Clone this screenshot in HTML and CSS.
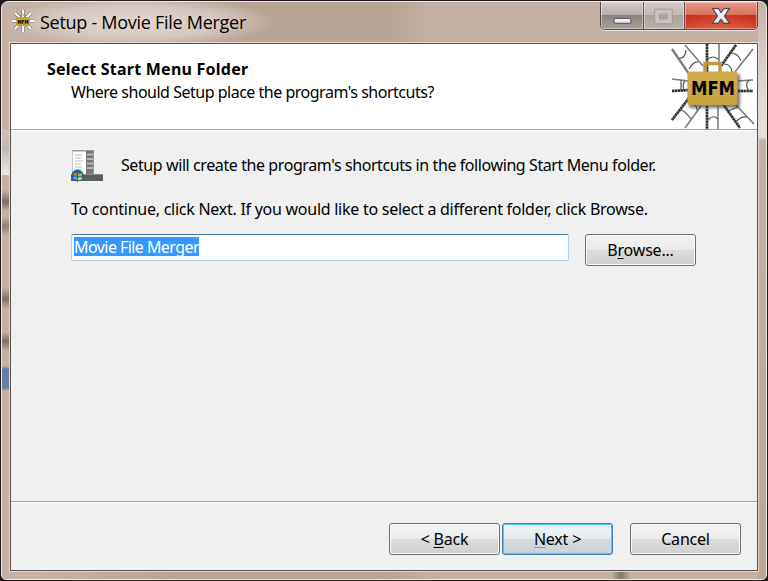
FILE: index.html
```html
<!DOCTYPE html>
<html lang="en">
<head>
<meta charset="utf-8">
<title>Setup - Movie File Merger</title>
<link rel="stylesheet" href="styles.css">
</head>
<body>
<svg width="0" height="0" class="defs" aria-hidden="true">
  <defs>
    <linearGradient id="gold" x1="0" y1="0" x2="0" y2="1"><stop offset="0" stop-color="#d1ad4d"/><stop offset="1" stop-color="#c6a13d"/></linearGradient>
    <linearGradient id="metal" x1="0" y1="0" x2="0" y2="1"><stop offset="0" stop-color="#fff"/><stop offset="1" stop-color="#d8dadd"/></linearGradient>
    <filter id="soft" x="-20%" y="-20%" width="140%" height="150%"><feGaussianBlur stdDeviation="1.5"/></filter>
  </defs>
</svg>
<main class="window">
  <header class="titlebar">
    <svg class="app-icon" viewBox="0 0 24 24">
      <g stroke="#777" stroke-width="3.2"><path d="M12 1V23M1 12H23M4 4L20 20M20 4L4 20"/></g>
      <g stroke="#fff" stroke-width="1.9"><path d="M12 1V23M1 12H23M4 4L20 20M20 4L4 20"/></g>
      <path d="M5 8H19V17H5Z" fill="#c7a13b"/><path d="M10 8V6H14V8" fill="none" stroke="#b38a2d"/>
      <text x="12" y="14.5" text-anchor="middle" class="mini" textLength="11" lengthAdjust="spacingAndGlyphs">MFM</text>
    </svg>
    <h1 class="caption">Setup - Movie File Merger</h1>
    <div class="controls">
      <span class="ctl min"><svg viewBox="0 0 43 28"><rect x="13.5" y="16.5" width="17" height="5" rx=".5" fill="url(#metal)" stroke="#4d5061"/></svg></span>
      <span class="ctl max"><svg viewBox="0 0 41 28"><path d="M11 7H29V22H11ZM16 12V17H24V12Z" fill="#c9c2bf" fill-rule="evenodd" stroke="#a49a96"/></svg></span>
      <span class="ctl close"><svg viewBox="0 0 73 28"><path d="M28 6.500H34L36.500 10.500L39.500 6.500H45L40 14L45.500 21.500H39.500L36.500 17.500L33.500 21.500H27.500L33 14Z" fill="url(#metal)" stroke="#574452" stroke-width="1.2"/></svg></span>
    </div>
  </header>
  <section class="client">
    <div class="banner">
      <div class="headings">
        <h2 class="heading">Select Start Menu Folder</h2>
        <p class="sub">Where should Setup place the program's shortcuts?</p>
      </div>
      <svg class="logo" viewBox="0 0 84 85">
        <g fill="none" stroke="#aaa" stroke-width="2.600">
          <path d="M36 0V28M65 1L50 22M1 5L18 30M1 47L18 46M67 47H82M18 54L1 76M36 62V85M52 60L69 84"/>
        </g>
        <g fill="none" stroke="#2e2e2e" stroke-width="2.600" stroke-dasharray="2.200 .7">
          <path d="M36 0V28M65 1L50 22M1 47L18 46M67 47H82M18 54L1 76M36 62V85M52 60L69 84"/>
        </g>
        <g fill="none" stroke="#777" stroke-width="1.500">
          <path d="M1 5L18 30M14 1L32 22M48 0V22M82 5L64 28M1 35L18 37M67 37L82 36M30 62L14 84M47 62V85M64 60L83 80"/>
        </g>
        <g fill="none" stroke="#555" stroke-width="1.200">
          <path d="M8 14Q14 15 15 6M18 25Q23 17 27 18M37 15Q42 11 47 15M60 9Q67 9 70 17M53 20Q60 20 61 28M10 36V46M14 37Q11 40 13 46M78 36Q73 41 78 47M9 65Q14 67 20 75M18 57Q26 60 26 66M37 76Q42 70 47 75M57 67Q62 65 67 63M65 78Q70 72 76 73"/>
        </g>
        <rect x="18" y="30" width="51" height="34" rx="2" fill="#333" opacity=".65" filter="url(#soft)"/>
        <path d="M34 28V19.500H49V28" fill="none" stroke="#c29b3e" stroke-width="3.500"/>
        <rect x="16.500" y="27.500" width="50" height="33.500" rx="2" fill="url(#gold)"/>
        <text x="42" y="50.500" class="mfm" text-anchor="middle" textLength="44" lengthAdjust="spacingAndGlyphs">MFM</text>
      </svg>
    </div>
    <div class="content">
      <div class="intro">
        <svg class="menu-icon" viewBox="0 0 32 32">
          <rect x="1" y="0" width="22" height="25" fill="#999"/><rect x="1.500" y="1.500" width="14" height="24" fill="#fff"/>
          <path d="M15 1H22V25H15Z" fill="#777"/>
          <path d="M4 5H11M4 8H10M4 11H12M4 14H10M4 17H11M4 20H10" stroke="#bbb"/>
          <path d="M16 4.500H22M16 9H22M16 13.500H22M16 18H22" stroke="#b8b8b8" stroke-width="2"/>
          <path d="M0 24H32V31H0Z" fill="#5c5e60"/><path d="M0 24.500H32" stroke="#8b8b8b"/>
          <circle cx="6.500" cy="25.500" r="6" fill="#216194"/><path d="M2.500 24Q4.500 22 6 23V26Q4 25 2.500 26Z" fill="#ef6c31"/><path d="M7 23Q9 24 11 23V26Q9 27 7 26Z" fill="#8fc341"/><path d="M2.500 27Q4 26 6 27V30Q4 29 2.500 29Z" fill="#55b4ed"/><path d="M7 27Q9 28 11 27V29Q9 30.500 7 30Z" fill="#fbd544"/>
        </svg>
        <p class="t-intro">Setup will create the program's shortcuts in the following Start Menu folder.</p>
      </div>
      <p class="hint">To continue, click Next. If you would like to select a different folder, click Browse.</p>
      <div class="picker">
        <div class="field"><span class="selected">Movie File Merger</span></div>
        <button class="btn browse"><span>B<u>r</u>owse...</span></button>
      </div>
    </div>
    <footer class="footer">
      <button class="btn back"><span>&lt; <u>B</u>ack</span></button>
      <button class="btn next"><span><u>N</u>ext &gt;</span></button>
      <button class="btn cancel"><span>Cancel</span></button>
    </footer>
  </section>
</main>
</body>
</html>
```
FILE: styles.css
```css
* { box-sizing: border-box; }
html, body { margin: 0; height: 100%; overflow: hidden; }
body { background: #211b20; font-family: "Noto Sans", sans-serif; font-size: 16px; color: #000; }
h1, h2, p { margin: 0; font-weight: normal; white-space: nowrap; }
svg { display: block; }
.defs { position: absolute; }
.window {
  width: 766px; height: 579px; margin: 1px 0 0 1px; padding: 0 8px 8px;
  border: 1px solid #f1e8e4; border-radius: 7px 7px 5px 5px;
  background:
    linear-gradient(180deg, #d2c1b5 0, #bdb8b5 18px, #e9e5e1 44px) 0 128px / 8px 45px no-repeat,
    linear-gradient(180deg, transparent 15px, #776b64 27px, transparent 36px, transparent 42px, #8d8079 51px, transparent 61px, transparent 112px, #7e7169 124px, transparent 134px, transparent 157px, #7b6d65 166px, transparent 176px, transparent 191px, #65809f 194px, #65809f 213px, transparent 216px) 0 173px / 8px 220px no-repeat,
    linear-gradient(90deg, transparent, #84756a, transparent) 609px 569px / 20px 8px no-repeat,
    linear-gradient(180deg, #c6b2a8 0, #ddd3cd 80px, #e7e1dc 135px, #c5b2a7 138px, #bba697 100%) 756px 0 / 8px 100% no-repeat,
    linear-gradient(90deg, #c6b1a7 0, #c5b1a5 40px, #b8a496 180px, #b9a595 390px, #c4b0a3 430px, #c5b1a4 100%);
}
.titlebar { display: flex; height: 41px; align-items: flex-start; background: radial-gradient(ellipse 135px 26px at 130px 20px, #e9dfdad9 0, #e4dad5a6 60%, transparent 100%); }
.app-icon { width: 24px; height: 24px; margin: 7px 0 0 1px; }
.mini { font: bold 5.5px "DejaVu Sans", sans-serif; }
.caption { margin: 6px 0 0 5px; font-family: "Open Sans", sans-serif; font-size: 18px; line-height: 28px; letter-spacing: -0.28px; }
.controls { display: flex; width: 158px; height: 28px; margin-left: auto; border: 1px solid #55494a; border-top: 0; border-radius: 0 0 5px 5px; overflow: hidden; box-shadow: 0 1px #eee3de; }
.ctl { box-shadow: inset 0 0 0 1px #ffffff66; }
.ctl svg { width: 100%; height: 28px; }
.min { width: 43px; border-right: 1px solid #5e5352; background: linear-gradient(#d4cac7, #b9aeab 48%, #8e827f 50%, #aaa09b); }
.max { width: 41px; border-right: 1px solid #5e5352; background: linear-gradient(#d5c9c3, #c3b8b3 48%, #ada29c 50%, #bbb0a9); }
.close { flex: 1; background: radial-gradient(ellipse at 50% 110%, #ef80595e, transparent 65%), linear-gradient(#e99a8c, #d96d5a 48%, #c5301c 50%, #d94c35); }
.client { display: flex; flex-direction: column; width: 748px; height: 528px; border: 1px solid #5e514d; outline: 1px solid #e5d8d0; background: #f0f0f0; }
.banner { display: flex; justify-content: space-between; height: 86px; background: #fff; border-bottom: 1px solid #a0a0a0; padding-right: 2px; }
.headings { padding: 14px 0 0 36px; }
.heading { font-size: 16px; font-weight: bold; line-height: 23px; letter-spacing: 0.24px; }
.sub { margin-left: 24px; line-height: 23px; letter-spacing: -0.49px; }
.logo { width: 84px; height: 85px; }
.mfm { font: bold 20px "DejaVu Sans", sans-serif; }
.content { flex: 1; padding: 19px 60px 0; border-top: 1px solid #fff; }
.intro { display: flex; gap: 18px; height: 47px; }
.menu-icon { width: 32px; height: 32px; }
.t-intro { line-height: 30px; letter-spacing: -0.41px; }
.hint { line-height: 24px; height: 37px; letter-spacing: -0.26px; }
.picker { display: flex; gap: 16px; }
.field { width: 498px; height: 27px; padding: 2px; border: 1px solid #b5cfe7; border-top-color: #3d7bad; border-radius: 2px; background: #fff; line-height: 20px; }
.selected { display: inline-block; height: 19px; line-height: 20px; background: #3399ff; color: #fff; letter-spacing: -0.56px; }
.btn { width: 111px; height: 32px; padding: 0; border: 1px solid #707070; border-radius: 3px; background: linear-gradient(#f3f3f3, #ebebeb 48%, #dddddd 50%, #cfcfcf); box-shadow: inset 0 0 0 1px #fafafa; font: inherit; color: #000; letter-spacing: -0.2px; }
u { text-decoration: underline; text-underline-offset: 2px; text-decoration-thickness: 1px; text-decoration-skip-ink: none; }
.footer { display: flex; height: 69px; padding: 21px 16px 0; justify-content: flex-end; border-top: 1px solid #a0a0a0; box-shadow: inset 0 1px #fff; }
.next { margin: 0 17px 0 2px; border-color: #3c7fb1; box-shadow: inset 0 0 0 1px #48cff7; background: linear-gradient(#f0f4f6, #e5ebee 48%, #d4dde2 50%, #c8d2d8); }
.next u { text-decoration-color: #999; }
```
